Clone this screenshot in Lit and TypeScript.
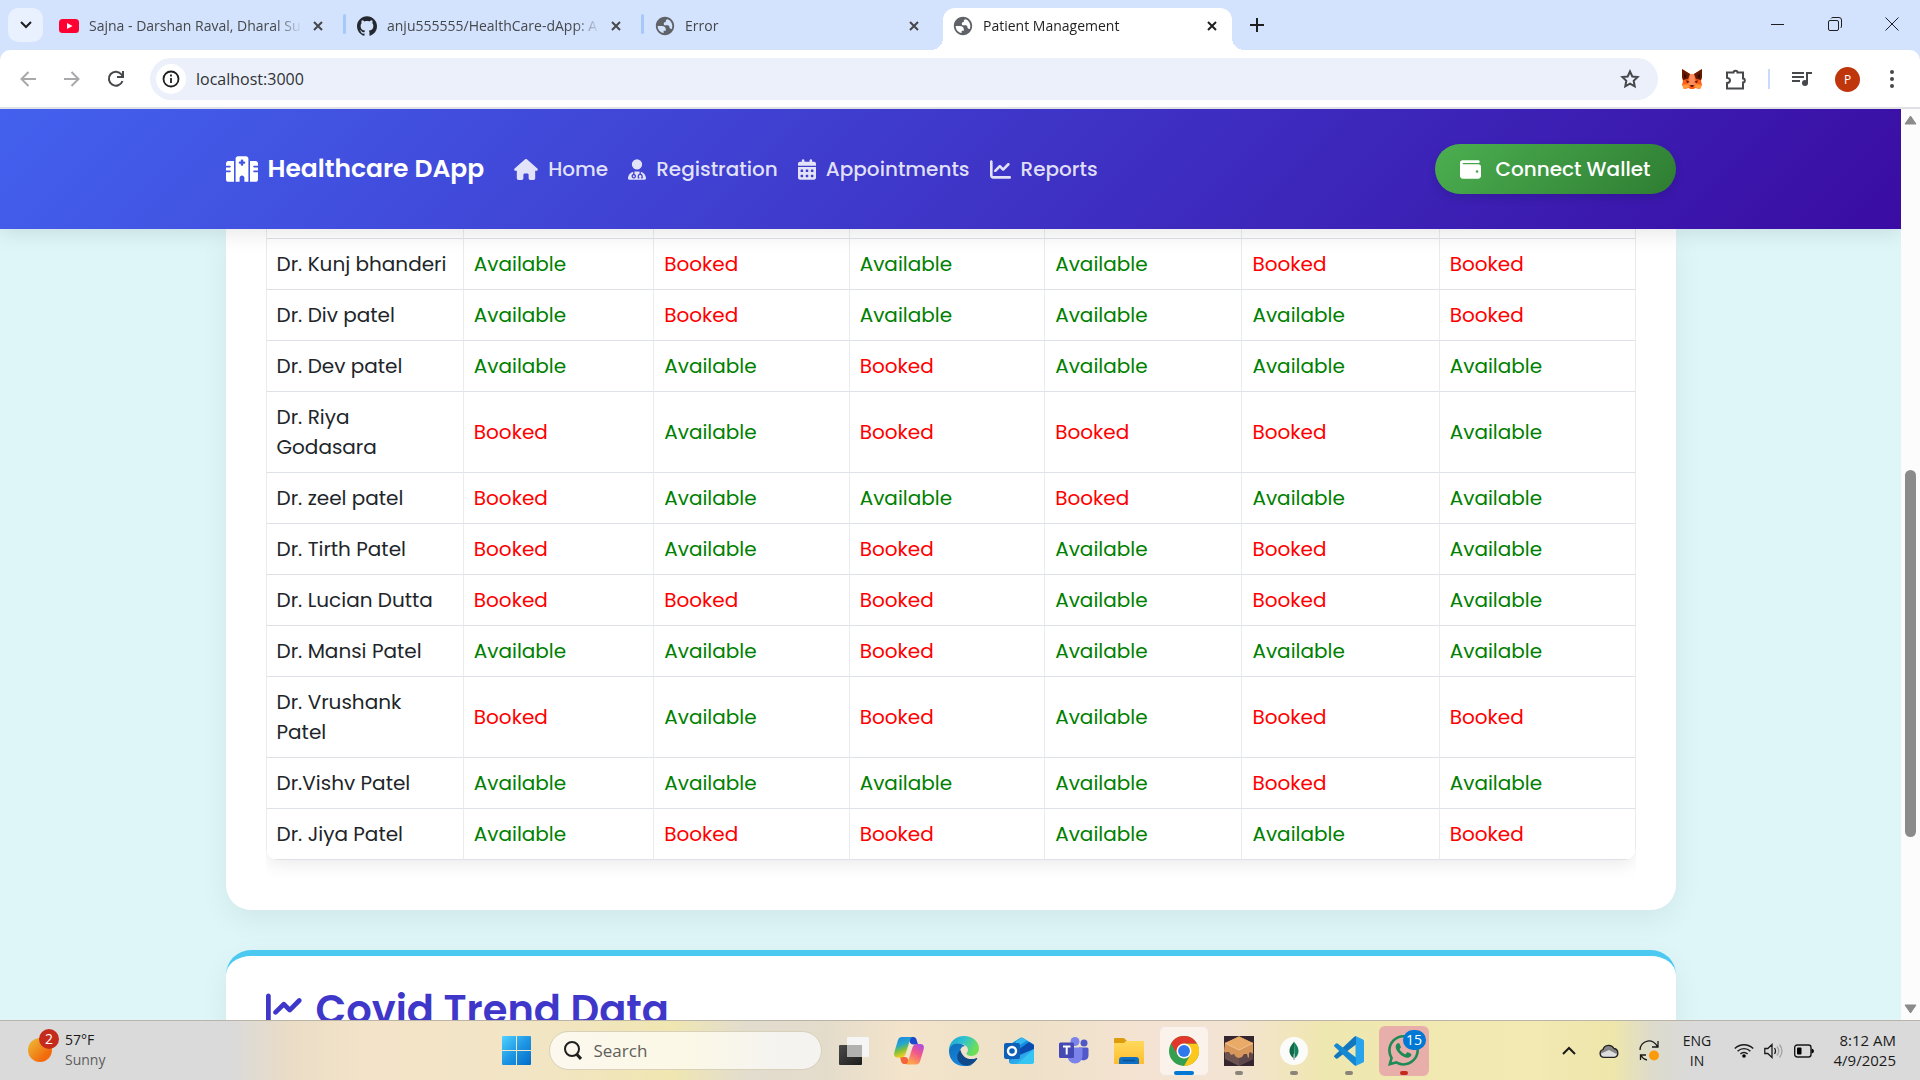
import { LitElement, html, svg, css } from "lit";
import { customElement } from "lit/decorators.js";
import { classMap } from "lit/directives/class-map.js";

const HOSPITAL =
  "M192 48c0-26.5 21.5-48 48-48H400c26.5 0 48 21.5 48 48V512H368V432c0-26.5-21.5-48-48-48s-48 21.5-48 48v80H192V48zM48 96H160V512H48c-26.5 0-48-21.5-48-48V320H80c8.8 0 16-7.2 16-16s-7.2-16-16-16H0V224H80c8.8 0 16-7.2 16-16s-7.2-16-16-16H0V144c0-26.5 21.5-48 48-48zm544 0c26.5 0 48 21.5 48 48v48H560c-8.8 0-16 7.2-16 16s7.2 16 16 16h80v64H560c-8.8 0-16 7.2-16 16s7.2 16 16 16h80V464c0 26.5-21.5 48-48 48H480V96H592zM312 64c-8.8 0-16 7.2-16 16v24H272c-8.8 0-16 7.2-16 16v16c0 8.800 7.200 16 16 16h24v24c0 8.800 7.200 16 16 16h16c8.800 0 16-7.200 16-16V152h24c8.800 0 16-7.200 16-16V120c0-8.800-7.200-16-16-16H344V80c0-8.800-7.200-16-16-16H312z";
const HOUSE =
  "M575.8 255.5c0 18-15 32.1-32 32.1h-32l.7 160.2c0 2.7-.2 5.4-.5 8.1V472c0 22.1-17.9 40-40 40H456c-1.1 0-2.2 0-3.3-.1c-1.4 .1-2.8 .1-4.2 .1H416 392c-22.1 0-40-17.9-40-40V448 384c0-17.7-14.3-32-32-32H256c-17.7 0-32 14.3-32 32v64 24c0 22.1-17.9 40-40 40H160 128.1c-1.5 0-3-.1-4.5-.2c-1.2 .1-2.4 .2-3.6 .2H104c-22.1 0-40-17.9-40-40V360c0-.9 0-1.9 .1-2.8V287.6H32c-18 0-32-14-32-32.1c0-9 3-17 10-24L266.4 8c7-7 15-8 22-8s15 2 21 7L564.8 231.5c8 7 12 15 11 24z";
const DOCTOR =
  "M224 256a128 128 0 1 0 0-256 128 128 0 1 0 0 256zm-96 55.2C54 332.9 0 401.3 0 482.3C0 498.7 13.3 512 29.7 512H418.3c16.4 0 29.7-13.3 29.7-29.7c0-81-54-149.4-128-171.1V362c27.6 7.1 48 32.2 48 62v40c0 8.8-7.2 16-16 16H336c-8.8 0-16-7.2-16-16s7.2-16 16-16V424c0-17.7-14.3-32-32-32s-32 14.3-32 32v24c8.8 0 16 7.2 16 16s-7.2 16-16 16H256c-8.8 0-16-7.2-16-16V424c0-29.8 20.4-54.9 48-62V304.9c-6-.6-12.1-.9-18.3-.9H178.3c-6.2 0-12.3 .3-18.3 .9v65.4c23.1 6.9 40 28.3 40 53.7c0 30.9-25.1 56-56 56s-56-25.1-56-56c0-25.4 16.9-46.8 40-53.7V311.2zM144 448a24 24 0 1 0 0-48 24 24 0 1 0 0 48z";
const CALENDAR =
  "M128 0c17.7 0 32 14.3 32 32V64H288V32c0-17.7 14.3-32 32-32s32 14.3 32 32V64h48c26.5 0 48 21.5 48 48v48H0V112C0 85.5 21.5 64 48 64H96V32c0-17.7 14.3-32 32-32zM0 192H448V464c0 26.5-21.5 48-48 48H48c-26.5 0-48-21.5-48-48V192zm64 80v32c0 8.8 7.2 16 16 16h32c8.8 0 16-7.2 16-16V272c0-8.8-7.2-16-16-16H80c-8.8 0-16 7.2-16 16zm128 0v32c0 8.8 7.2 16 16 16h32c8.8 0 16-7.2 16-16V272c0-8.8-7.2-16-16-16H208c-8.8 0-16 7.2-16 16zm144-16c-8.8 0-16 7.2-16 16v32c0 8.8 7.2 16 16 16h32c8.8 0 16-7.2 16-16V272c0-8.8-7.2-16-16-16H336zM64 400v32c0 8.8 7.2 16 16 16h32c8.8 0 16-7.2 16-16V400c0-8.8-7.2-16-16-16H80c-8.8 0-16 7.2-16 16zm144-16c-8.8 0-16 7.2-16 16v32c0 8.8 7.2 16 16 16h32c8.8 0 16-7.2 16-16V400c0-8.8-7.2-16-16-16H208zm112 16v32c0 8.8 7.2 16 16 16h32c8.8 0 16-7.2 16-16V400c0-8.8-7.2-16-16-16H336c-8.8 0-16 7.2-16 16z";
const CHART =
  "M64 64c0-17.7-14.3-32-32-32S0 46.3 0 64V400c0 44.2 35.8 80 80 80H480c17.7 0 32-14.3 32-32s-14.3-32-32-32H80c-8.8 0-16-7.2-16-16V64zm406.6 86.6c12.5-12.5 12.5-32.8 0-45.3s-32.8-12.5-45.3 0L320 210.7l-57.4-57.4c-12.5-12.5-32.8-12.5-45.3 0l-112 112c-12.5 12.5-12.5 32.8 0 45.3s32.8 12.5 45.3 0L240 221.3l57.4 57.4c12.5 12.5 32.8 12.5 45.3 0l128-128z";
const WALLET =
  "M64 32C28.7 32 0 60.7 0 96V416c0 35.3 28.7 64 64 64H448c35.3 0 64-28.7 64-64V192c0-35.3-28.7-64-64-64H80c-8.8 0-16-7.2-16-16s7.2-16 16-16H448c17.7 0 32-14.3 32-32s-14.3-32-32-32H64zM416 272a32 32 0 1 1 0 64 32 32 0 1 1 0-64z";
const OCTOCAT =
  "M12 .297c-6.63 0-12 5.373-12 12 0 5.303 3.438 9.8 8.205 11.385.6.113.82-.258.82-.577 0-.285-.01-1.04-.015-2.04-3.338.724-4.042-1.61-4.042-1.61C4.422 18.07 3.633 17.7 3.633 17.7c-1.087-.744.084-.729.084-.729 1.205.084 1.838 1.236 1.838 1.236 1.07 1.835 2.809 1.305 3.495.998.108-.776.417-1.305.76-1.605-2.665-.3-5.466-1.332-5.466-5.93 0-1.31.465-2.38 1.235-3.22-.135-.303-.54-1.523.105-3.176 0 0 1.005-.322 3.3 1.23.96-.267 1.98-.399 3-.405 1.02.006 2.04.138 3 .405 2.28-1.552 3.285-1.23 3.285-1.23.645 1.653.24 2.873.12 3.176.765.84 1.23 1.91 1.23 3.22 0 4.61-2.805 5.625-5.475 5.92.42.36.81 1.096.81 2.22 0 1.606-.015 2.896-.015 3.286 0 .315.21.69.825.57C20.565 22.092 24 17.592 24 12.297c0-6.627-5.373-12-12-12";
const GLOBE =
  "M12 2C6.48 2 2 6.48 2 12s4.48 10 10 10 10-4.48 10-10S17.52 2 12 2zM4 12h4.4c3.4.02 4.9 1.73 4.5 5.13h-2.4v2.6c-3.7-.6-6.5-3.9-6.5-7.73zm16 0c0 1-.2 2-.5 2.9-.9.9-2.7 0-2.7-1.7 0-1.2-1-1.9-2.5-1.9h-3.1c-1.3-3.2.3-3.8 1.7-3.8V6c0-.9 1.1-1.4 2.1-1.5C18 5.7 20 8.6 20 12z";
const WHATSAPP =
  "M380.9 97.1C339 55.1 283.2 32 223.9 32c-122.4 0-222 99.6-222 222 0 39.1 10.2 77.3 29.6 111L0 480l117.7-30.9c32.4 17.7 68.9 27 106.1 27h.1c122.3 0 224.1-99.6 224.1-222 0-59.3-25.2-115-67.1-157zm-157 341.6c-33.2 0-65.7-8.9-94-25.7l-6.7-4-69.8 18.3L72 359.2l-4.4-7c-18.5-29.4-28.2-63.3-28.2-98.2 0-101.7 82.8-184.5 184.6-184.5 49.3 0 95.6 19.2 130.4 54.1 34.8 34.9 56.2 81.2 56.1 130.5 0 101.8-84.9 184.6-186.6 184.6zm101.2-138.2c-5.5-2.8-32.8-16.2-37.9-18-5.1-1.9-8.8-2.8-12.5 2.8-3.7 5.6-14.3 18-17.6 21.8-3.2 3.7-6.5 4.2-12 1.4-32.6-16.3-54-29.1-75.5-66-5.7-9.8 5.7-9.1 16.3-30.3 1.8-3.7.9-6.9-.5-9.7-1.4-2.8-12.5-30.1-17.1-41.2-4.5-10.8-9.1-9.3-12.5-9.5-3.2-.2-6.9-.2-10.6-.2-3.7 0-9.7 1.4-14.8 6.9-5.1 5.6-19.4 19-19.4 46.3 0 27.3 19.9 53.7 22.6 57.4 2.8 3.7 39.1 59.7 94.8 83.8 35.2 15.2 49 16.5 66.6 13.9 10.7-1.6 32.8-13.4 37.4-26.4 4.6-13 4.6-24.1 3.2-26.4-1.3-2.5-5-3.9-10.5-6.6z";

const icon = (w: number, h: number, box: string, content: unknown) =>
  html`<svg class="icon" width=${w} height=${h} viewBox=${box} aria-hidden="true">${content}</svg>`;
const solid = (w: number, h: number, box: string, d: string, fill = "currentColor") =>
  icon(w, h, box, svg`<path d=${d} fill=${fill} fill-rule="evenodd"></path>`);
const line = (w: number, h: number, box: string, d: string, width = 2) =>
  icon(w, h, box, svg`<path d=${d} fill="none" stroke="currentColor" stroke-width=${width}></path>`);

const controls = css`
  *,
  *::before,
  *::after {
    box-sizing: border-box;
  }
  button {
    display: flex;
    align-items: center;
    justify-content: center;
    padding: 0;
    border: 0;
    background: none;
    font: inherit;
    color: inherit;
  }
  input {
    min-width: 0;
    padding: 0;
    border: 0;
    outline: 0;
    background: none;
    font: inherit;
    color: inherit;
  }
  .icon {
    display: block;
    flex: none;
  }
`;

@customElement("browser-chrome")
class BrowserChrome extends LitElement {
  static styles = [
    controls,
    css`
      :host {
        display: block;
        background: #d3e2fd;
        font-family: "Open Sans", "Noto Sans", sans-serif;
        color: #1f1f1f;
      }
      .strip {
        display: flex;
        align-items: center;
        height: 50px;
        padding-left: 8px;
      }
      .menu {
        width: 35px;
        height: 34px;
        margin-right: 6px;
        border-radius: 10px;
        background: #e9f0fe;
      }
      .tab {
        position: relative;
        display: flex;
        align-items: center;
        width: 289px;
        height: 42px;
        margin: 8px 9px 0 0;
        padding: 0 10px 7px 10px;
        font-size: 14px;
        color: #45474a;
      }
      .tab.divided::after {
        content: "";
        position: absolute;
        right: -8px;
        top: 6px;
        width: 3px;
        height: 20px;
        border-radius: 2px;
        background: #a8c7fa;
      }
      .tab.active {
        margin-right: 10px;
        border-radius: 12px 12px 0 0;
        background: #ffffff;
        color: #1f1f1f;
      }
      .tab.active::before,
      .tab.active::after {
        content: "";
        position: absolute;
        bottom: 0;
        width: 12px;
        height: 12px;
      }
      .tab.active::before {
        left: -12px;
        background: radial-gradient(circle at 0 0, transparent 12px, #ffffff 12px);
      }
      .tab.active::after {
        right: -12px;
        background: radial-gradient(circle at 100% 0, transparent 12px, #ffffff 12px);
      }
      .favicon {
        display: flex;
        justify-content: center;
        width: 20px;
        margin-right: 10px;
      }
      .title {
        flex: 1;
        overflow: hidden;
        line-height: 20px;
        white-space: nowrap;
        mask-image: linear-gradient(to right, #000 88%, transparent);
      }
      .close {
        width: 20px;
        height: 20px;
        margin-left: 6px;
      }
      .add {
        width: 30px;
        height: 30px;
      }
      .window {
        display: flex;
        align-self: stretch;
        margin-left: auto;
      }
      .window button {
        width: 57px;
        height: 48px;
      }
      .toolbar {
        display: flex;
        align-items: center;
        height: 59px;
        padding: 1px 6px 0 6px;
        border-bottom: 2px solid #dfe1e5;
        border-radius: 10px 10px 0 0;
        background: #ffffff;
        color: #47484b;
      }
      .tool {
        width: 44px;
        height: 36px;
      }
      .off {
        color: #a9a9ab;
      }
      .address {
        display: flex;
        align-items: center;
        flex: 1;
        height: 42px;
        margin: 0 12px;
        padding: 0 18px 0 6px;
        border-radius: 21px;
        background: #ebf0fa;
      }
      .site {
        width: 30px;
        height: 30px;
        margin-right: 10px;
        border-radius: 50%;
        background: #ffffff;
        color: #1f1f1f;
      }
      .url {
        flex: 1;
        height: 24px;
        font-size: 16px;
        color: #303236;
      }
      .rule {
        width: 2px;
        height: 20px;
        margin: 0 10px;
        background: #c9dcfb;
      }
      .avatar {
        width: 25px;
        height: 25px;
        margin: 0 10px 0 11px;
        border-radius: 50%;
        background: #bf360c;
        font-size: 12px;
        color: #ffffff;
      }
    `,
  ];

  private tab(fav: unknown, title: string, divided: boolean, active = false) {
    return html`<div class=${classMap({ tab: true, divided, active })} role="tab" aria-selected=${active}>
      <span class="favicon">${fav}</span><span class="title">${title}</span>
      <button class="close" aria-label="Close tab">${line(10, 10, "0 0 10 10", "M1 1l8 8M9 1l-8 8", 2)}</button>
    </div>`;
  }

  render() {
    const globe = solid(22, 22, "0 0 24 24", GLOBE, "#5f6368");
    return html`
      <div class="strip" role="tablist">
        <button class="menu" aria-label="Search tabs">${line(12, 8, "0 0 12 8", "M1 1l5 5 5-5", 2)}</button>
        ${this.tab(
          icon(20, 14, "0 0 20 14", svg`<rect width="20" height="14" rx="3.5" fill="#ff0033"></rect><path d="M8 4l5.5 3L8 10z" fill="#fff"></path>`),
          "Sajna - Darshan Raval, Dharal Su",
          true,
        )}
        ${this.tab(solid(20, 20, "0 0 24 24", OCTOCAT, "#24292f"), "anju555555/HealthCare-dApp: A", true)}
        ${this.tab(globe, "Error", false)} ${this.tab(globe, "Patient Management", false, true)}
        <button class="add" aria-label="New tab">${line(14, 14, "0 0 14 14", "M7 0v14M0 7h14", 2)}</button>
        <div class="window">
          <button aria-label="Minimize">${line(13, 13, "0 0 13 13", "M0 6.5h13", 1)}</button>
          <button aria-label="Restore">
            ${icon(
              14,
              14,
              "0 0 14 14",
              svg`<rect x=".5" y="3.5" width="10" height="10" rx="1.5" fill="none" stroke="currentColor"></rect><path d="M3 1.5Q3.500.5 5 .5h6a2.500 2.500 0 0 1 2.500 2.500v6q0 1.500-1 2" fill="none" stroke="currentColor"></path>`,
            )}
          </button>
          <button aria-label="Close">${line(14, 14, "0 0 14 14", "M.5.5l13 13M13.500.5l-13 13", 1)}</button>
        </div>
      </div>
      <div class="toolbar">
        <button class="tool off" aria-label="Back">${line(16, 16, "0 0 16 16", "M16 8H1.500M8.500 1L1.500 8l7 7", 2)}</button>
        <button class="tool off" aria-label="Forward">${line(16, 16, "0 0 16 16", "M0 8h14.500M7.500 1l7 7-7 7", 2)}</button>
        <button class="tool" aria-label="Reload">
          ${icon(
            18,
            18,
            "0 0 18 18",
            svg`<path d="M15.500 11A7 7 0 1 1 14.500 4.500L15.500 6" fill="none" stroke="currentColor" stroke-width="2"></path><path d="M17 1v7h-7V6h5V1z" fill="currentColor"></path>`,
          )}
        </button>
        <div class="address">
          <button class="site" aria-label="Site information">
            ${icon(
              18,
              18,
              "0 0 18 18",
              svg`<circle cx="9" cy="9" r="7.5" fill="none" stroke="currentColor" stroke-width="1.8"></circle><path d="M9 8v5M9 4.500v2" stroke="currentColor" stroke-width="1.8"></path>`,
            )}
          </button>
          <input class="url" aria-label="Address" .value=${"localhost:3000"} />
          <button aria-label="Bookmark">
            ${line(20, 20, "0 0 20 20", "M10 2.500l2.300 5 5.300.600-3.900 3.700 1 5.500L10 14.600l-4.700 2.700 1-5.500L2.400 8.100l5.300-.600z", 2)}
          </button>
        </div>
        <button class="tool" aria-label="Wallet extension">
          ${icon(
            22,
            22,
            "0 0 22 22",
            svg`<path d="M1 1l8 5h4l8-5 0 8-1 4 1 4-2 4-5-1-1 1H9l-1-1-5 1-2-4 1-4-1-4z" fill="#ff5c16"></path><path d="M1 1l8 5-2 5-5 1-1-3zM21 1l-8 5 2 5 5 1 1-3z" fill="#661800"></path><path d="M3 5l3 3-3 3zM19 5l-3 3 3 3z" fill="#3a0c00"></path><path d="M9 6h4l1 6 1 4-4 3-4-3 1-4z" fill="#ff8d5d"></path><path d="M5 12l4 2-3 1zM17 12l-4 2 3 1zM9 17h4l-1 2h-2z" fill="#661800"></path><path d="M1 17l6-1 2 3-6 2zM21 17l-6-1-2 3 6 2z" fill="#ff9a3d"></path>`,
          )}
        </button>
        <button class="tool" aria-label="Extensions">
          ${line(22, 22, "0 0 22 22", "M2 4.500h6.500a2 1.800 0 0 1 4 0H18V10.500a1.800 2 0 0 1 0 4V20.500H2v-5.500c4-.6 4-4.600 0-5.200z", 2)}
        </button>
        <span class="rule"></span>
        <button class="tool" aria-label="Media controls">
          ${icon(
            22,
            20,
            "0 0 22 20",
            svg`<path d="M1 4h12M1 8h12M1 12h8" stroke="currentColor" stroke-width="2"></path><circle cx="14" cy="14" r="3" fill="currentColor"></circle><path d="M16 14V4h5" fill="none" stroke="currentColor" stroke-width="2"></path>`,
          )}
        </button>
        <button class="avatar" aria-label="Profile">P</button>
        <button class="tool" aria-label="Browser menu">
          ${icon(
            4,
            18,
            "0 0 4 18",
            svg`<g fill="currentColor"><circle cx="2" cy="2" r="2"></circle><circle cx="2" cy="9" r="2"></circle><circle cx="2" cy="16" r="2"></circle></g>`,
          )}
        </button>
      </div>
    `;
  }
}

@customElement("site-header")
class SiteHeader extends LitElement {
  static styles = [
    controls,
    css`
      :host {
        display: block;
        position: relative;
        z-index: 1;
        background: linear-gradient(135deg, #4361ee, #3a0ca3);
        box-shadow: 0 4px 20px rgba(0, 0, 0, 0.1);
      }
      .bar {
        display: flex;
        align-items: center;
        max-width: 1450px;
        height: 120px;
        margin: 0 auto;
        color: #ffffff;
      }
      a {
        display: flex;
        align-items: center;
        gap: 10px;
        color: inherit;
        text-decoration: none;
        white-space: nowrap;
      }
      .brand {
        margin-right: 30px;
        font-size: 25px;
        font-weight: 600;
        line-height: 40px;
      }
      nav {
        display: flex;
        gap: 20px;
        font-size: 20px;
        font-weight: 500;
        line-height: 30px;
        color: rgba(255, 255, 255, 0.85);
      }
      .connect {
        gap: 14px;
        height: 50px;
        margin-left: auto;
        padding: 0 25px;
        border-radius: 25px;
        background: linear-gradient(135deg, #4caf50, #2e7d32);
        box-shadow: 0 4px 10px rgba(0, 0, 0, 0.12);
        font-size: 20px;
        font-weight: 500;
      }
    `,
  ];

  render() {
    return html`<div class="bar">
      <a class="brand" href="#">${solid(32, 26, "0 0 640 512", HOSPITAL)}Healthcare DApp</a>
      <nav>
        <a href="#home">${solid(24, 21, "0 0 576 512", HOUSE)}Home</a>
        <a href="#registration">${solid(18, 21, "0 0 448 512", DOCTOR)}Registration</a>
        <a href="#appointments">${solid(18, 21, "0 0 448 512", CALENDAR)}Appointments</a>
        <a href="#reports">${solid(21, 21, "0 0 512 512", CHART)}Reports</a>
      </nav>
      <button class="connect">${solid(21, 21, "0 0 512 512", WALLET)}Connect Wallet</button>
    </div>`;
  }
}

/* One letter per time slot: A = available, B = booked. */
const doctors: [string, string][] = [
  ["Dr. Kunj bhanderi", "ABAABB"],
  ["Dr. Div patel", "ABAAAB"],
  ["Dr. Dev patel", "AABAAA"],
  ["Dr. Riya\nGodasara", "BABBBA"],
  ["Dr. zeel patel", "BAABAA"],
  ["Dr. Tirth Patel", "BABABA"],
  ["Dr. Lucian Dutta", "BBBABA"],
  ["Dr. Mansi Patel", "AABAAA"],
  ["Dr. Vrushank\nPatel", "BABABB"],
  ["Dr.Vishv Patel", "AAAABA"],
  ["Dr. Jiya Patel", "ABBAAB"],
];

@customElement("schedule-table")
class ScheduleTable extends LitElement {
  static styles = css`
    :host {
      display: block;
      overflow: hidden;
      padding-bottom: 20px;
    }
    .frame {
      overflow: hidden;
      border-radius: 0 0 12px 12px;
      box-shadow: 0 5px 18px rgba(0, 0, 0, 0.08);
    }
    table {
      width: 100%;
      border-collapse: separate;
      border-spacing: 0;
      table-layout: fixed;
      font-size: 20px;
      line-height: 30px;
    }
    th,
    td {
      padding: 10px;
      border-top: 1px solid #dee2e6;
      border-left: 1px solid #e9ebee;
      font-weight: 400;
      text-align: left;
    }
    th {
      color: #212529;
      white-space: pre-line;
    }
    td:last-child {
      border-right: 1px solid #e9ebee;
    }
    tr:last-child > * {
      border-bottom: 1px solid #dee2e6;
    }
    .edge td {
      height: 9px;
      padding: 0;
      border-top: 0;
    }
    .name {
      width: 14.4%;
    }
    .first {
      width: 13.9%;
    }
    .mid {
      width: 14.27%;
    }
    .late {
      width: 14.4%;
    }
    .yes {
      color: #008000;
    }
    .no {
      color: #ff0000;
    }
  `;

  render() {
    return html`<div class="frame">
      <table aria-label="Doctor availability">
        <colgroup>
          <col class="name" />
          <col class="first" />
          <col class="mid" span="2" />
          <col class="late" span="2" />
          <col />
        </colgroup>
        <tbody>
          <tr class="edge">
            <td></td><td></td><td></td><td></td><td></td><td></td><td></td>
          </tr>
          ${doctors.map(
            ([name, slots]) => html`<tr>
              <th scope="row">${name}</th>
              ${[...slots].map((s) => (s === "A" ? html`<td class="yes">Available</td>` : html`<td class="no">Booked</td>`))}
            </tr>`,
          )}
        </tbody>
      </table>
    </div>`;
  }
}

@customElement("task-bar")
class TaskBar extends LitElement {
  static styles = [
    controls,
    css`
      :host {
        display: grid;
        grid-template-columns: 1fr auto 1fr;
        align-items: center;
        height: 60px;
        border-top: 1px solid #b9b3a8;
        background: linear-gradient(
          to right,
          #dadada 12%,
          #eadcc6 15%,
          #f3e3c9 19%,
          #f2e5c4 28%,
          #efe6b1 35%,
          #e2dccf 39%,
          #e4dccb 43%,
          #f3e4cb 47%,
          #eee1c8 53%,
          #f4e3d2 60%,
          #f3e3d3 64%,
          #efe7b0 69%,
          #f2e9b3 80%,
          #efe6ab 84%,
          #dddbcb 86%,
          #dadada 88%
        );
        font-family: "Open Sans", "Noto Sans", sans-serif;
        font-size: 14px;
        line-height: 20px;
        color: #1a1a1a;
      }
      .weather {
        justify-self: start;
        gap: 13px;
        margin-left: 28px;
        padding-bottom: 2px;
        text-align: left;
      }
      .sun {
        position: relative;
        width: 24px;
        height: 24px;
        border-radius: 50%;
        background: linear-gradient(135deg, #ecc038, #f26a0c 75%);
      }
      .count {
        position: absolute;
        right: -7px;
        top: -9px;
        width: 20px;
        height: 20px;
        border-radius: 50%;
        background: #c42b1c;
        text-align: center;
        color: #ffffff;
      }
      .muted {
        display: block;
        color: #5d5d5d;
      }
      .apps {
        display: flex;
        align-items: center;
        gap: 5px;
      }
      .app {
        position: relative;
        width: 50px;
        height: 50px;
        border-radius: 6px;
      }
      .app.running::after {
        content: "";
        position: absolute;
        bottom: 1px;
        left: 21px;
        width: 8px;
        height: 4px;
        border-radius: 2px;
        background: #8a8578;
      }
      .app.focused {
        background: #fbf2ec;
        box-shadow: inset 0 0 0 1px #efe3da;
      }
      .app.focused::after {
        left: 15px;
        width: 20px;
        background: #0078d4;
      }
      .app.alert {
        background: #e8aeaa;
      }
      .app.alert::after {
        background: #c42b1c;
      }
      .unread {
        position: absolute;
        right: 3px;
        top: 4px;
        width: 23px;
        height: 20px;
        border-radius: 10px;
        background: #0078d4;
        color: #ffffff;
        text-align: center;
      }
      .search {
        display: flex;
        align-items: center;
        gap: 12px;
        width: 273px;
        height: 39px;
        margin: 0 2px;
        padding: 0 14px;
        border: 1px solid #d8d0b8;
        border-radius: 20px;
        background: linear-gradient(to right, #fcf8ee, #fbf8e6 50%, #f5f3f0 85%);
        font-size: 17px;
      }
      .search input {
        flex: 1;
      }
      .search input::placeholder {
        color: #5f5e5a;
        opacity: 1;
      }
      .tray {
        display: flex;
        align-items: center;
        justify-self: end;
        margin-right: 24px;
      }
      .tray button {
        width: 40px;
        height: 50px;
      }
      .tray .lang {
        width: 56px;
        margin-right: 4px;
      }
      .tray .status {
        width: 30px;
      }
      .tray .clock {
        width: 77px;
        justify-content: flex-end;
        padding-bottom: 2px;
        font-size: 15px;
        text-align: right;
      }
    `,
  ];

  render() {
    return html`
      <button class="weather">
        <span class="sun"><span class="count">2</span></span>
        <span>57°F<span class="muted">Sunny</span></span>
      </button>
      <div class="apps">
        <button class="app" aria-label="Start">
          ${icon(
            29,
            29,
            "0 0 29 29",
            svg`<defs><linearGradient id="win" gradientUnits="userSpaceOnUse" x1="0" y1="0" x2="29" y2="29"><stop stop-color="#50d2ff"></stop><stop offset=".5" stop-color="#1f97e4"></stop><stop offset="1" stop-color="#006cc8"></stop></linearGradient></defs><path d="M0 1q0-1 1-1h13v14H0zM15 0h13q1 0 1 1v13H15zM0 15h14v14H1q-1 0-1-1zM15 15h14v13q0 1-1 1H15z" fill="url(#win)"></path>`,
          )}
        </button>
        <label class="search">
          ${icon(
            18,
            19,
            "0 0 18 19",
            svg`<circle cx="8" cy="8" r="7" fill="none" stroke="#202020" stroke-width="2"></circle><path d="M12.500 13l4.500 5" stroke="#202020" stroke-width="3"></path>`,
          )}
          <input aria-label="Search" placeholder="Search" />
        </label>
        <button class="app" aria-label="Task view">
          ${icon(
            30,
            28,
            "0 0 30 28",
            svg`<defs><linearGradient id="tv" x2="1" y2="1"><stop stop-color="#4a4a48"></stop><stop offset="1" stop-color="#1d1d1b"></stop></linearGradient></defs><rect y="8" width="23" height="20" rx="1" fill="url(#tv)"></rect><rect x="8" width="22" height="20" rx="1" fill="#f5f5f5"></rect><rect x="8" y="8" width="15" height="12" fill="#b1b1b0"></rect>`,
          )}
        </button>
        <button class="app" aria-label="Copilot">
          ${icon(
            30,
            28,
            "0 0 30 28",
            svg`<defs><linearGradient id="c1" x2=".3" y2="1"><stop stop-color="#1a7fe8"></stop><stop offset=".45" stop-color="#27a9c8"></stop><stop offset=".7" stop-color="#7fc03c"></stop><stop offset="1" stop-color="#f3cd1e"></stop></linearGradient><linearGradient id="c2" x1="1" x2=".5" y2="1"><stop stop-color="#a14bef"></stop><stop offset=".5" stop-color="#f0568c"></stop><stop offset="1" stop-color="#ffa24c"></stop></linearGradient></defs><path d="M14 0h5.500q2 0 2.800 2l1.700 5.500h-5q-2 0-3-2z" fill="#1c48cf"></path><path d="M16 27H10q-2 0-2.700-2L6 20h5q2 0 3 2z" fill="#f2653a"></path><path d="M8 0h10q-1.500 1-2 3l-4.500 14q-1 3.500-4.500 3.500H4Q-1 20.500.4 15L4 3Q5 0 8 0z" fill="url(#c1)"></path><path d="M22 27.500H12q1.500-1 2-3l4.500-14q1-3.500 4.500-3.500h3q5 0 3.600 5.500L26 24.500q-1 3-4 3z" fill="url(#c2)"></path>`,
          )}
        </button>
        <button class="app" aria-label="Edge">
          ${icon(
            30,
            30,
            "0 0 30 30",
            svg`<defs><linearGradient id="e1" x2="1" y2=".4"><stop stop-color="#1c9fd8"></stop><stop offset=".5" stop-color="#2fc3d0"></stop><stop offset="1" stop-color="#6fe053"></stop></linearGradient><linearGradient id="e2" x2=".5" y2="1"><stop stop-color="#0f6fb8"></stop><stop offset="1" stop-color="#1687e0"></stop></linearGradient></defs><path d="M0 14C0 6 7 0 15 0c9 0 15 6 15 12.500 0 4.500-3.500 7.500-7.500 7.500-3 0-5-1-5-2.200 0-1 1.500-1.500 1.500-4 0-3-3.500-6-8-6C6 7.800 2 10 0 14z" fill="url(#e1)"></path><path d="M0 15c0-4 4-7.500 9-7.500 3 0 5.500 1 7 2.500-3 0-5 3-5 6 0 7 6 12.500 12 13 -2 .800-4.500 1-8 1C7 30 0 24 0 15z" fill="url(#e2)"></path><path d="M11.500 14C8 17 7 22 10 26c3 4 10 5 14 1.500 2-1.500 3.500-3.500 4.300-5-.3-.8-.8-.5-1.300-.3-7 2.800-14-1-15.500-8.200z" fill="#114a8b"></path>`,
          )}
        </button>
        <button class="app" aria-label="Outlook">
          ${icon(
            30,
            27,
            "0 0 30 27",
            svg`<defs><linearGradient id="o1" x2="1" y2="1"><stop stop-color="#2386e0"></stop><stop offset="1" stop-color="#33c8f4"></stop></linearGradient></defs><path d="M5 8L16 1q1.500-1 3 0l10 6q1 .6 1 2v15q0 2-2 2H7q-2 0-2-2z" fill="#1490df"></path><path d="M12 4l5-3q1-.6 2 0l4 2.400L11 11z" fill="#35b8f1"></path><path d="M25 5l5 3v4L14 21l-3-6z" fill="#0a4bb0"></path><path d="M30 12v12q0 3-3 3H8q-3 0-3-3l8-5z" fill="url(#o1)"></path><path d="M30 12v12q0 3-3 3H13z" fill="#36c4f3"></path><rect y="6" width="16" height="16" rx="2" fill="#0e5fb8"></rect><circle cx="8" cy="14" r="4" fill="none" stroke="#fff" stroke-width="2.400"></circle>`,
          )}
        </button>
        <button class="app" aria-label="Teams">
          ${icon(
            30,
            27,
            "0 0 30 27",
            svg`<circle cx="25" cy="6" r="3.500" fill="#5059c9"></circle><path d="M20 10.500h8q1.500 0 1.500 1.500v6.500a5 5 0 0 1-9.500 2z" fill="#5059c9"></path><circle cx="16" cy="4.500" r="4.500" fill="#7b83eb"></circle><path d="M9 10.500h13q1.500 0 1.500 1.500v7a7.500 7.500 0 0 1-15 0z" fill="#7b83eb"></path><rect y="5.500" width="15" height="15.500" rx="1.500" fill="#4449b3"></rect><path d="M4 9.500h7.500M7.700 9.500v8" stroke="#fff" stroke-width="2"></path>`,
          )}
        </button>
        <button class="app" aria-label="File Explorer">
          ${icon(
            30,
            26,
            "0 0 30 26",
            svg`<defs><linearGradient id="f1" x2="0" y2="1"><stop stop-color="#ffd95c"></stop><stop offset="1" stop-color="#fdbd2e"></stop></linearGradient></defs><path d="M0 1q0-1 1-1h8q1 0 1.500.6L13 3h16q1 0 1 1v4H0z" fill="#dc9c0c"></path><path d="M0 5h10l2-2h17q1 0 1 1v22H0z" fill="url(#f1)"></path><path d="M5 26v-4q0-3 3-3h14q3 0 3 3v4z" fill="#0f6fc2"></path><path d="M9 22.500h12" stroke="#0a4f93" stroke-width="1.500"></path>`,
          )}
        </button>
        <button class="app running focused" aria-label="Chrome">
          ${icon(
            30,
            30,
            "0 0 48 48",
            svg`<circle cx="24" cy="24" r="24" fill="#34a04f"></circle><path d="M24 12h20.800A24 24 0 0 1 24 48l10.400-18z" fill="#fdc81a"></path><path d="M3.200 12L13.600 30 24 12z" fill="#e2382c"></path><path d="M24 12h20.800A24 24 0 0 0 3.200 12l10.400 6z" fill="#e2382c"></path><circle cx="24" cy="24" r="12" fill="#fff"></circle><circle cx="24" cy="24" r="9.500" fill="#2f78ec"></circle>`,
          )}
        </button>
        <button class="app running" aria-label="Game">
          ${icon(
            30,
            30,
            "0 0 30 30",
            svg`<path d="M0 0h30v30H0z" fill="#35252e"></path><path d="M1 8L15 0l14 8v15l-14 7-14-7z" fill="#6d5350"></path><path d="M15 15l14-8v16l-14 7z" fill="#5d464a"></path><path d="M1 7L15 0.500 29 7v10l-1 1-1-2-2 1v4l-1 1-1-4-3 0-2 3-3 1-3-1-2-3-3 1-2-3-3 0-1 1-1-2z" fill="#d8975a"></path><path d="M1 7L15 0.500 29 7l-14 7z" fill="#eaaa68"></path><path d="M1 7l14 7 14-7" fill="none" stroke="#f2c48f"></path>`,
          )}
        </button>
        <button class="app running" aria-label="MongoDB Compass">
          ${icon(
            28,
            28,
            "0 0 28 28",
            svg`<circle cx="14" cy="14" r="14" fill="#fbfbfa"></circle><path d="M14 4.500c1 2 4.500 4.500 4.500 9.500 0 4-2.500 6.500-4 7.500z" fill="#13825a"></path><path d="M14 4.500C13 7 9.500 9 9.500 14c0 4 3 6.500 4.500 7.500z" fill="#0f6a48"></path><path d="M14 17v6" stroke="#9fb5a8" stroke-width="1.400"></path>`,
          )}
        </button>
        <button class="app running" aria-label="Visual Studio Code">
          ${icon(
            30,
            30,
            "0 0 30 30",
            svg`<path d="M21.500 0L29 3.500q1 .5 1 1.500v20q0 1-1 1.500L21.500 30z" fill="#28a4ec"></path><path d="M22 0v8.500L3.500 22.500q-.8.600-1.600 0L.4 21q-.8-.8 0-1.600L20 1z" fill="#1377bd"></path><path d="M22 30v-8.500L3.500 7.500q-.8-.600-1.600 0L.4 9q-.8.8 0 1.600L20 29z" fill="#1488d2"></path>`,
          )}
        </button>
        <button class="app running alert" aria-label="WhatsApp">
          ${solid(31, 31, "0 32 448 448", WHATSAPP, "#1d8a57")}<span class="unread">15</span>
        </button>
      </div>
      <div class="tray">
        <button aria-label="Show hidden icons">${line(14, 9, "0 0 14 9", "M1 8l6-6 6 6", 2)}</button>
        <button aria-label="OneDrive">
          ${icon(
            20,
            14,
            "0 0 20 14",
            svg`<path d="M4.500 13.300a4 4 0 0 1-.5-7.800A6 6 0 0 1 15 4.500a4.500 4.500 0 0 1 .5 8.800z" fill="#858585"></path><path d="M1 10l9-4 8.500 4.500q-1 2.600-3 2.800h-11Q1.500 13 1 10z" fill="#dedede"></path><path d="M4.500 13.300a4 4 0 0 1-.5-7.800A6 6 0 0 1 15 4.500a4.500 4.500 0 0 1 .5 8.800z" fill="none" stroke="#222" stroke-width="1.300"></path>`,
          )}
        </button>
        <button aria-label="Updates">
          ${icon(
            20,
            21,
            "0 0 20 21",
            svg`<path d="M1 10a9 9 0 0 1 17.500-3M19 1v6h-6M8 20a9 9 0 0 1-6-4.500M1.500 20v-5h5.500" fill="none" stroke="currentColor" stroke-width="1.300"></path><circle cx="15" cy="15.500" r="5" fill="#fb9a0a"></circle>`,
          )}
        </button>
        <button class="lang">ENG<br />IN</button>
        <button class="status" aria-label="Network">
          ${icon(
            20,
            15,
            "0 0 20 15",
            svg`<path d="M.8 5.500a13 13 0 0 1 18.400 0M3.600 8.300a9 9 0 0 1 12.800 0M6.400 11a5 5 0 0 1 7.200 0" fill="none" stroke="currentColor" stroke-width="1.400"></path><circle cx="10" cy="13" r="1.800"></circle>`,
          )}
        </button>
        <button class="status" aria-label="Volume">
          ${icon(
            20,
            16,
            "0 0 20 16",
            svg`<path d="M.8 5.500h3L8 1.500v13l-4.200-4h-3zM10.500 5q2 3 0 6" fill="none" stroke="currentColor" stroke-width="1.300"></path><path d="M13 3.500q3.500 4.500 0 9M15.500 1.500q5 6.500 0 13" fill="none" stroke="#a3a3a3" stroke-width="1.300"></path>`,
          )}
        </button>
        <button class="status" aria-label="Battery">
          ${icon(
            20,
            14,
            "0 0 20 14",
            svg`<rect x=".7" y="1" width="16.300" height="12" rx="2.500" fill="none" stroke="currentColor" stroke-width="1.400"></rect><rect x="3" y="3.500" width="4.500" height="7" rx="1"></rect><path d="M17.500 4.500q2.500.5 2.500 2.500t-2.500 2.500z"></path>`,
          )}
        </button>
        <button class="clock">8:12 AM<br />4/9/2025</button>
      </div>
    `;
  }
}

@customElement("app-root")
class AppRoot extends LitElement {
  static styles = css`
    *,
    *::before,
    *::after {
      box-sizing: border-box;
    }
    :host {
      display: flex;
      flex-direction: column;
      height: 100vh;
      overflow: hidden;
      font-family: Poppins, Inter, sans-serif;
    }
    .view {
      display: flex;
      flex: 1;
      min-height: 0;
    }
    .page {
      flex: 1;
      overflow: hidden;
      background: #def6f8;
    }
    main {
      display: flex;
      flex-direction: column;
      gap: 40px;
      max-width: 1450px;
      margin: 0 auto;
    }
    .card {
      padding: 0 40px 30px;
      border-radius: 0 0 25px 25px;
      background: #ffffff;
      box-shadow: 0 10px 30px rgba(0, 0, 0, 0.06);
    }
    .trend {
      padding-top: 30px;
      border-top: 6px solid #4cc9f0;
      border-radius: 25px;
    }
    h2 {
      display: flex;
      align-items: center;
      gap: 12px;
      margin: 0;
      font-size: 40px;
      font-weight: 600;
      line-height: 48px;
      color: #3f37c9;
    }
    .scroll {
      display: flex;
      flex-direction: column;
      align-items: center;
      width: 19px;
      padding: 6px 0;
      background: #fcfcfc;
      color: #8b8b8b;
    }
    .scroll .icon {
      display: block;
      flex: none;
    }
    .before {
      flex: 345;
    }
    .thumb {
      flex: 367;
      width: 11px;
      border-radius: 6px;
      background: #8b8b8b;
    }
    .after {
      flex: 167;
    }
  `;

  render() {
    return html`
      <browser-chrome></browser-chrome>
      <div class="view">
        <div class="page">
          <site-header></site-header>
          <main>
            <section class="card"><schedule-table></schedule-table></section>
            <section class="card trend">
              <h2>${solid(38, 38, "0 0 512 512", CHART)}Covid Trend Data</h2>
            </section>
          </main>
        </div>
        <div class="scroll" aria-hidden="true">
          ${icon(13, 10, "0 0 13 10", svg`<path d="M6.500 1l5.500 8H1z" fill="currentColor" stroke="currentColor" stroke-linejoin="round"></path>`)}
          <span class="before"></span><span class="thumb"></span><span class="after"></span>
          ${icon(13, 10, "0 0 13 10", svg`<path d="M6.500 9L1 1h11z" fill="currentColor" stroke="currentColor" stroke-linejoin="round"></path>`)}
        </div>
      </div>
      <task-bar></task-bar>
    `;
  }
}
